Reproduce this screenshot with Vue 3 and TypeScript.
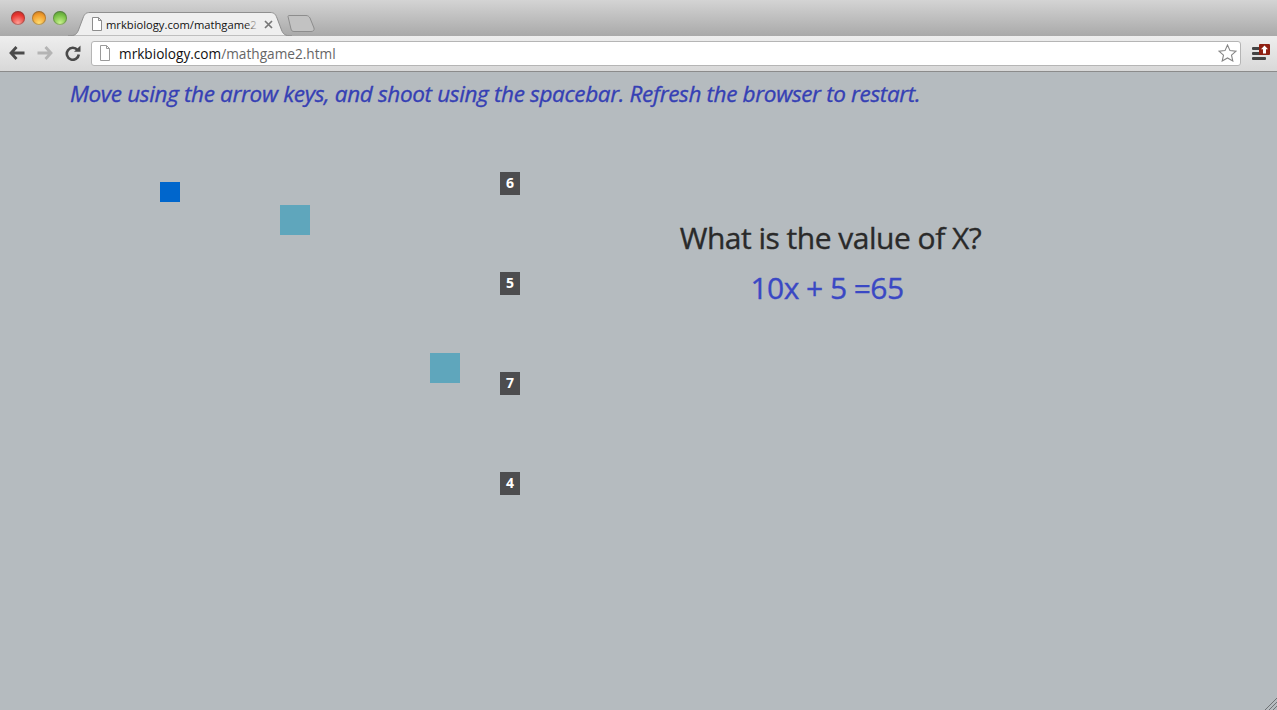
<script setup lang="ts">
// squares on the game canvas, offsets are from the top left of the page area
const bullets = [
  { id: 1, x: 280, y: 133 },
  { id: 2, x: 430, y: 281 },
];
const answers = [
  { id: 1, value: 6, y: 100 },
  { id: 2, value: 5, y: 200 },
  { id: 3, value: 7, y: 300 },
  { id: 4, value: 4, y: 400 },
];
const lights = ["red", "yellow", "green"];
</script>

<template>
  <div class="window">
    <div class="tabstrip">
      <div class="lights">
        <span v-for="l in lights" :key="l" class="light" :class="l"></span>
      </div>
      <div class="tab">
        <svg class="tab-bg" width="224" height="24" viewBox="0 0 224 24">
          <path d="M0 24 C7 24 9 22 10.500 18 L15 6 C16.500 2 18 .5 22 .5 L202 .5 C206 .5 207.500 2 209 6 L213.500 18 C215 22 217 24 224 24 Z" fill="#efefef" stroke="#8f8f8f" />
        </svg>
        <svg class="file-icon tab-file" width="12" height="14" viewBox="0 0 12 14">
          <path d="M1.500 .5 H7.500 L10.500 3.500 V13.500 H1.500 Z M7.500 .5 V3.500 H10.500" fill="#fff" stroke="#8d8d8d" />
        </svg>
        <span class="tab-title">mrkbiology.com/mathgame2</span>
        <span class="tab-fade"></span>
        <svg class="tab-close" width="9" height="9" viewBox="0 0 9 9">
          <path d="M1 1 L8 8 M8 1 L1 8" stroke="#777" stroke-width="1.700" />
        </svg>
      </div>
      <svg class="new-tab" width="28" height="17" viewBox="0 0 28 17">
        <path d="M1 1.500 C1 1 1.500 .5 2 .5 L19 .5 C21 .5 22 1.500 23 3 L27 13 C27.500 15 26.500 16.500 24 16.500 L7 16.500 C5 16.500 4.500 15.500 4 14 Z" fill="#c2c2c2" stroke="#8d8d8d" />
      </svg>
    </div>

    <div class="toolbar">
      <svg class="nav-btn" width="16" height="14" viewBox="0 0 16 14">
        <path d="M7.500 1 L2 7 L7.500 13 M2.500 7 H15.500" fill="none" stroke="#4a4a4a" stroke-width="2.800" />
      </svg>
      <svg class="nav-btn" width="16" height="14" viewBox="0 0 16 14">
        <path d="M8.500 1 L14 7 L8.500 13 M13.500 7 H.5" fill="none" stroke="#b4b4b4" stroke-width="2.800" />
      </svg>
      <svg class="nav-btn" width="16" height="16" viewBox="0 0 16 16">
        <path d="M12.500 5 A6 6 0 1 0 13.800 9.500" fill="none" stroke="#4a4a4a" stroke-width="2.600" />
        <path d="M9 6.800 H15.500 V.5 Z" fill="#4a4a4a" />
      </svg>
      <div class="omnibox">
        <svg class="file-icon" width="12" height="16" viewBox="0 0 12 16">
          <path d="M1.500 .5 H7.500 L10.500 3.500 V15.500 H1.500 Z M7.500 .5 V3.500 H10.500" fill="#fff" stroke="#9a9a9a" />
        </svg>
        <span class="url"><span class="host">mrkbiology.com</span>/mathgame2.html</span>
        <svg class="star" width="19" height="18" viewBox="0 0 19 18">
          <path d="M9.500 1 L12 6.600 L18 7.200 L13.500 11.200 L14.800 17 L9.500 14 L4.200 17 L5.500 11.200 L1 7.200 L7 6.600 Z" fill="#fff" stroke="#858585" stroke-width="1.100" />
        </svg>
      </div>
      <div class="menu">
        <span class="bar"></span>
        <span class="bar"></span>
        <span class="bar"></span>
        <svg class="update" width="11" height="11" viewBox="0 0 11 11">
          <rect width="11" height="11" rx="1" fill="#8f2012" />
          <path d="M5.500 1.500 L9 5.200 H7 V9.500 H4 V5.200 H2 Z" fill="#fff" />
        </svg>
      </div>
    </div>

    <div class="page">
      <p class="instructions">Move using the arrow keys, and shoot using the spacebar. Refresh the browser to restart.</p>

      <div class="player"></div>
      <div v-for="b in bullets" :key="b.id" class="enemy" :style="{ left: b.x + 'px', top: b.y + 'px' }"></div>
      <div v-for="a in answers" :key="a.id" class="answer" :style="{ top: a.y + 'px' }">{{ a.value }}</div>

      <div class="question">
        <div class="q-title">What is the value of X?</div>
        <div class="q-sum">10x + 5 =65</div>
      </div>

      <svg class="grip" width="13" height="13" viewBox="0 0 13 13">
        <path d="M1 13 L13 1 M5 13 L13 5 M9 13 L13 9" stroke="#6f7275" stroke-width="1" />
      </svg>
    </div>
  </div>
</template>

<style>
html,
body {
  margin: 0;
  overflow: hidden;
}
</style>

<style scoped>
.window {
  width: 1277px;
  height: 710px;
  display: flex;
  flex-direction: column;
  font-family: "Open Sans", "Noto Sans", sans-serif;
  background: #b5bbbf;
}
.tabstrip {
  height: 36px;
  flex: none;
  display: flex;
  align-items: flex-end;
  position: relative;
  background: linear-gradient(#d4d4d4, #a9a9a9);
  box-sizing: border-box;
}
.lights {
  display: flex;
  gap: 7px;
  position: absolute;
  left: 11px;
  top: 11px;
}
.light {
  width: 14px;
  height: 14px;
  border-radius: 50%;
  box-shadow: inset 0 0 0 1px rgba(70, 70, 70, 0.35);
}
.light.red {
  background: radial-gradient(circle at 50% 85%, #ff9f96, #e8352f 60%, #a82a28);
}
.light.yellow {
  background: radial-gradient(circle at 50% 85%, #ffdc70, #f09a2a 60%, #b06a20);
}
.light.green {
  background: radial-gradient(circle at 50% 85%, #c8f28c, #74bd42 60%, #4c8b34);
}
.tab {
  position: relative;
  width: 224px;
  height: 24px;
  margin-left: 68px;
  display: flex;
  align-items: center;
  font-size: 11.200px;
  color: #111;
}
.tab-bg {
  position: absolute;
  left: 0;
  top: 0;
}
.tab-file {
  position: relative;
  margin-left: 23px;
}
.tab-title {
  position: relative;
  margin-left: 3px;
  width: 155px;
  white-space: nowrap;
}
.tab-fade {
  position: absolute;
  left: 177px;
  top: 4px;
  width: 14px;
  height: 18px;
  background: linear-gradient(90deg, rgba(239, 239, 239, 0), #efefef);
}
.tab-close {
  position: relative;
  margin-left: 3px;
}
.new-tab {
  margin-left: -5px;
  margin-bottom: 4px;
}
.toolbar {
  height: 36px;
  flex: none;
  box-sizing: border-box;
  display: flex;
  align-items: center;
  background: linear-gradient(#eeeeee, #d8d8d8);
  border-bottom: 1px solid #8b8b8b;
  padding: 0 11px 1px 9px;
}
.nav-btn {
  flex: none;
  margin-right: 12px;
}
.nav-btn:nth-child(3) {
  margin-right: 10px;
}
.omnibox {
  flex: 1;
  height: 25px;
  box-sizing: border-box;
  display: flex;
  align-items: center;
  background: #fff;
  border: 1px solid #b5b5b5;
  border-radius: 3px;
  padding: 0 3px 0 7px;
}
.url {
  flex: 1;
  margin-left: 8px;
  font-size: 13.650px;
  color: #666;
}
.host {
  color: #111;
}
.menu {
  position: relative;
  width: 14px;
  margin-left: 11px;
  display: flex;
  flex-direction: column;
  gap: 2px;
}
.bar {
  height: 3px;
  background: #444;
  border-radius: 1px;
}
.update {
  position: absolute;
  right: -4px;
  top: -3px;
}
.page {
  position: relative;
  flex: 1;
  background: #b5bbbf;
}
.instructions {
  margin: 7px 0 0 70px;
  font-size: 22.500px;
  line-height: 29px;
  font-style: italic;
  color: #3540b4;
  letter-spacing: -0.34px;
  -webkit-text-stroke: 0.35px #3540b4;
}
.player {
  position: absolute;
  left: 160px;
  top: 110px;
  width: 20px;
  height: 20px;
  background: #0066cc;
}
.enemy {
  position: absolute;
  width: 30px;
  height: 30px;
  background: #5fa6bc;
}
.answer {
  position: absolute;
  left: 500px;
  width: 20px;
  height: 23px;
  background: #4d4d4f;
  color: #fff;
  font-size: 14px;
  font-weight: 700;
  line-height: 21px;
  text-align: center;
}
.question {
  position: absolute;
  left: 527px;
  top: 145px;
  width: 600px;
  text-align: center;
}
.q-title {
  padding-left: 7px;
  font-size: 30px;
  line-height: 42px;
  color: #2a2a2a;
  letter-spacing: -0.5px;
  -webkit-text-stroke: 0.35px #2a2a2a;
}
.q-sum {
  margin-top: 8px;
  font-size: 30px;
  line-height: 42px;
  color: #3a48c4;
  letter-spacing: -0.55px;
  -webkit-text-stroke: 0.35px #3a48c4;
}
.grip {
  position: absolute;
  right: 0;
  bottom: 0;
}
</style>
